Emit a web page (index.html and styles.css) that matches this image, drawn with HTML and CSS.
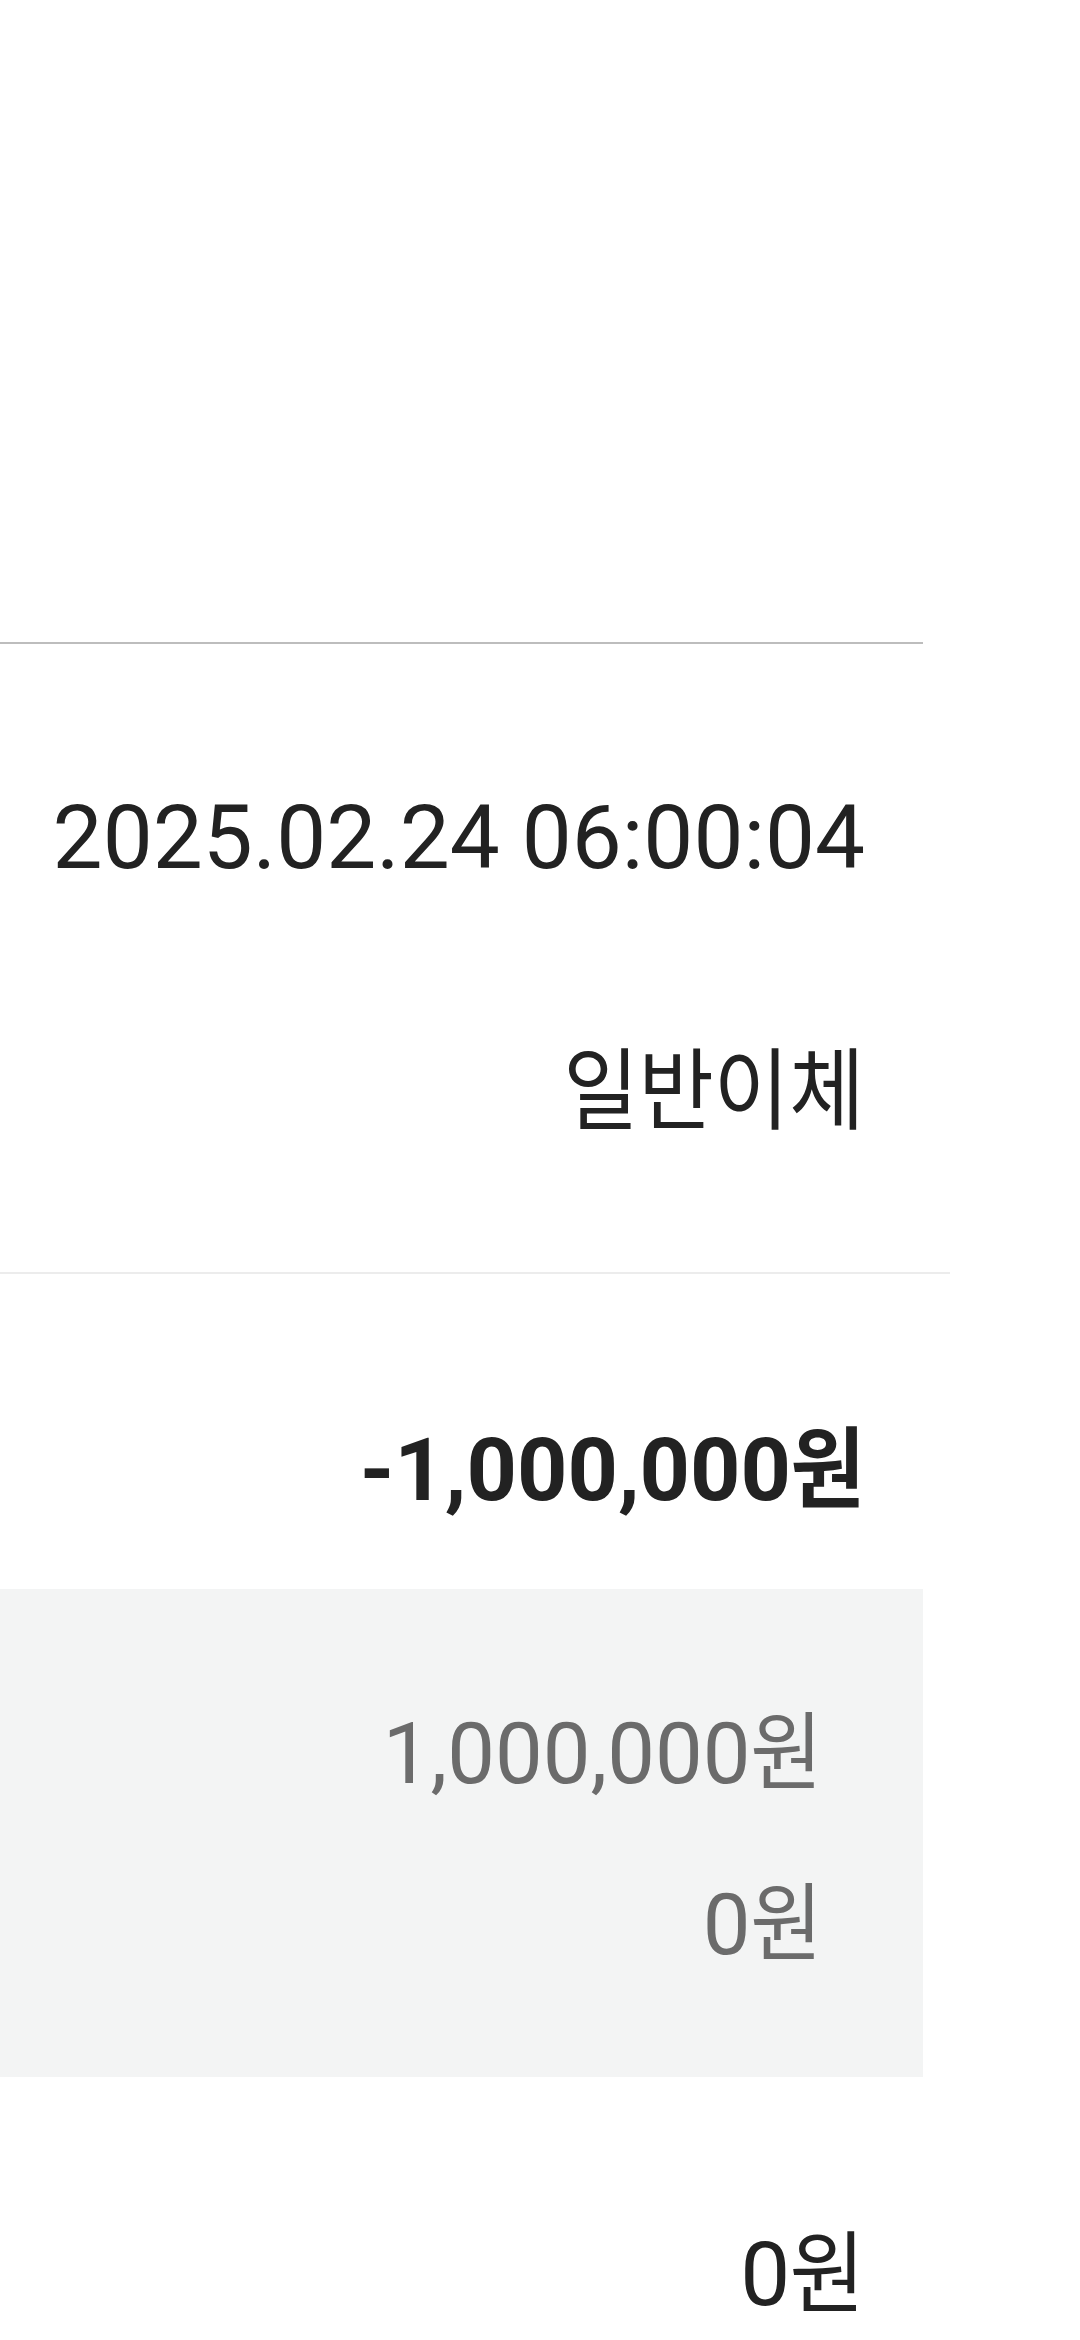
FILE: index.html
```html
<!DOCTYPE html>
<html lang="ko">
<head>
<meta charset="utf-8">
<title>이체 상세</title>
<link rel="stylesheet" href="styles.css">
</head>
<body>
<main class="page">
  <div class="top-space"></div>
  <hr class="divider divider-strong">
  <section class="info">
    <div class="row">2025.02.24 06:00:04</div>
    <div class="row"><span class="ko ko-word">일반이체</span></div>
  </section>
  <hr class="divider divider-light">
  <section class="amount">
    <div class="row row-bold">-1,000,000<span class="ko ko-unit">원</span></div>
  </section>
  <section class="detail">
    <div class="row row-sub">1,000,000<span class="ko ko-unit">원</span></div>
    <div class="row row-sub">0<span class="ko ko-unit">원</span></div>
  </section>
  <section class="fee">
    <div class="row">0<span class="ko ko-unit">원</span></div>
  </section>
</main>
</body>
</html>
```

FILE: styles.css
```css
html, body {
  margin: 0;
  padding: 0;
  background: #ffffff;
}

body {
  font-family: Roboto, "Noto Sans CJK KR", sans-serif;
  color: #222222;
  width: 1080px;
  height: 2340px;
  overflow: hidden;
}

.page {
  display: flex;
  flex-direction: column;
  width: 1080px;
}

.top-space {
  height: 642px;
}

.divider {
  margin: 0;
  border: 0;
  height: 2px;
}

.divider-strong {
  width: 923px;
  background: #bdbdbd;
}

.divider-light {
  width: 950px;
  background: #ececec;
}

.row {
  font-size: 89px;
  line-height: 120px;
  height: 120px;
  text-align: right;
  white-space: nowrap;
}

.ko {
  font-family: "Noto Sans CJK KR", sans-serif;
  display: inline-block;
  transform: scaleX(0.92);
  transform-origin: right center;
}

.ko-unit {
  margin-left: -0.08em;
}

.info {
  width: 923px;
  box-sizing: border-box;
  padding: 134px 58px 128px 0;
  display: flex;
  flex-direction: column;
  gap: 126px;
}

.amount {
  width: 923px;
  box-sizing: border-box;
  padding: 128px 58px 67px 0;
}

.row-bold {
  font-size: 88px;
  font-weight: 700;
}

.detail {
  width: 923px;
  box-sizing: border-box;
  background: #f3f4f4;
  padding: 97px 101px 100px 0;
  display: flex;
  flex-direction: column;
  gap: 51px;
}

.row-sub {
  font-size: 85px;
  color: #6b6b6b;
}

.fee {
  width: 923px;
  box-sizing: border-box;
  padding: 130px 58px 0 0;
}
```
